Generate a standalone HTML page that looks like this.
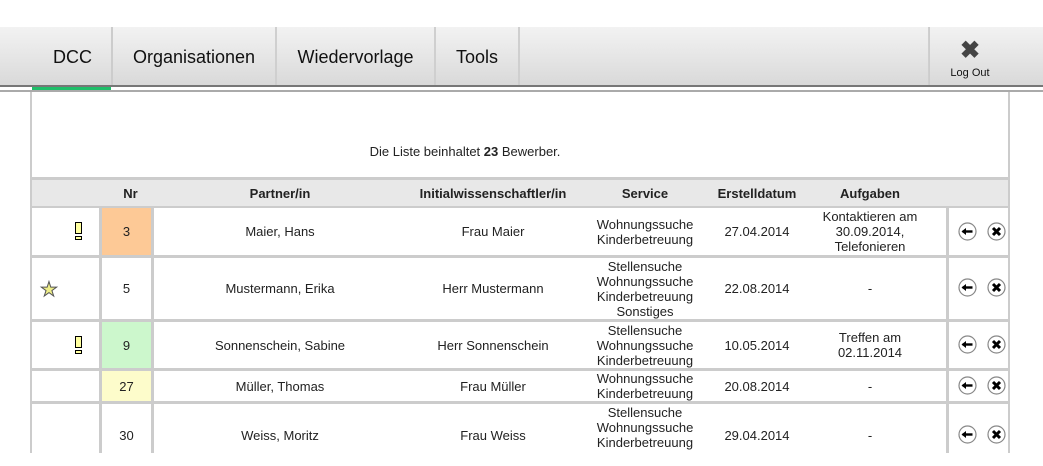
<!DOCTYPE html><html><head><style>
body{margin:0;width:1043px;height:453px;background:#fff;font-family:"Liberation Sans",sans-serif;position:relative;overflow:hidden;color:#222}
.nav{position:absolute;top:27px;left:0;width:1043px;height:58px;background:linear-gradient(#f2f2f2,#e6e6e6 50%,#d9d9d9)}
.tab{position:absolute;top:0;height:58px;line-height:60px;font-size:18px;text-align:center;color:#111;border-right:2px solid #cfcfcf}
.a{position:absolute}
.c{position:absolute;text-align:center;font-size:13px;line-height:15px;display:flex;align-items:center;justify-content:center}
.h{font-weight:bold}
svg.b{position:absolute;width:19px;height:19px}
</style></head><body>
<div class="nav">
<div class="tab" style="left:0;width:111px;border-right:2px solid #ccc"><span style="padding-left:34px">DCC</span></div>
<div class="tab" style="left:113px;width:162px">Organisationen</div>
<div class="tab" style="left:277px;width:157px">Wiedervorlage</div>
<div class="tab" style="left:436px;width:82px">Tools</div>
<div class="tab" style="left:520px;width:408px"></div>
<div class="a" style="left:929px;top:0;width:80px;height:58px;border-left:1px solid #ccc;text-align:center">
<div style="font-size:24px;font-weight:bold;color:#444;line-height:24px;margin-top:12px">✖</div>
<div style="font-size:11px;color:#111;margin-top:4px">Log Out</div></div>
</div>
<div class="a" style="top:85px;left:0;width:1043px;height:2px;background:#777"></div>
<div class="a" style="top:87px;left:32px;width:79px;height:3px;background:#1fbf6a"></div>
<div class="a" style="top:90px;left:0;width:1043px;height:2px;background:#aaa"></div>
<div class="a" style="top:92px;left:30px;width:2px;height:361px;background:#ccc"></div>
<div class="a" style="top:92px;left:1008px;width:2px;height:361px;background:#ccc"></div>
<div class="a" style="top:144px;left:365px;width:200px;text-align:center;font-size:13px">Die Liste beinhaltet <b>23</b> Bewerber.</div>
<div class="a" style="top:177px;left:32px;width:976px;height:3px;background:#ccc"></div>
<div class="a" style="top:180px;left:32px;width:976px;height:26px;background:#e8e8e8"></div>
<div class="c h" style="top:180px;left:105px;width:51px;height:26px">Nr</div>
<div class="c h" style="top:180px;left:153px;width:254px;height:26px">Partner/in</div>
<div class="c h" style="top:180px;left:407px;width:172px;height:26px">Initialwissenschaftler/in</div>
<div class="c h" style="top:180px;left:590px;width:110px;height:26px">Service</div>
<div class="c h" style="top:180px;left:702px;width:110px;height:26px">Erstelldatum</div>
<div class="c h" style="top:180px;left:815px;width:110px;height:26px">Aufgaben</div>
<div class="a" style="top:206px;left:32px;width:976px;height:2px;background:#ccc"></div>
<div class="a" style="top:255px;left:32px;width:976px;height:3px;background:#ccc"></div>
<div class="a" style="top:319px;left:32px;width:976px;height:3px;background:#ccc"></div>
<div class="a" style="top:368px;left:32px;width:976px;height:3px;background:#ccc"></div>
<div class="a" style="top:401px;left:32px;width:976px;height:3px;background:#ccc"></div>
<div class="a" style="top:206px;left:99px;width:3px;height:247px;background:#ccc"></div>
<div class="a" style="top:206px;left:151px;width:3px;height:247px;background:#ccc"></div>
<div class="a" style="top:206px;left:946px;width:3px;height:247px;background:#ccc"></div>
<div class="a" style="top:208px;left:102px;width:49px;height:47px;background:#fdc996"></div>
<div class="a" style="top:322px;left:102px;width:49px;height:46px;background:#ccf7cc"></div>
<div class="a" style="top:371px;left:102px;width:49px;height:30px;background:#fdfccb"></div>
<div class="a" style="top:222px;left:75px;width:5px;height:10px;background:#ffffa0;border:1px solid #000"></div><div class="a" style="top:236px;left:75px;width:5px;height:2px;background:#ffffa0;border:1px solid #000"></div>
<div class="c" style="top:208px;left:102px;width:49px;height:47px">3</div>
<div class="c" style="top:208px;left:153px;width:254px;height:47px">Maier, Hans</div>
<div class="c" style="top:208px;left:407px;width:172px;height:47px">Frau Maier</div>
<div class="c" style="top:208px;left:590px;width:110px;height:47px">Wohnungssuche<br>Kinderbetreuung</div>
<div class="c" style="top:208px;left:702px;width:110px;height:47px">27.04.2014</div>
<div class="c" style="top:208px;left:815px;width:110px;height:47px">Kontaktieren am<br>30.09.2014,<br>Telefonieren</div>
<div class="a" style="top:277px;left:40px;font-size:20px;color:#ee8;-webkit-text-stroke:1px #555">★</div>
<div class="c" style="top:258px;left:102px;width:49px;height:61px">5</div>
<div class="c" style="top:258px;left:153px;width:254px;height:61px">Mustermann, Erika</div>
<div class="c" style="top:258px;left:407px;width:172px;height:61px">Herr Mustermann</div>
<div class="c" style="top:258px;left:590px;width:110px;height:61px">Stellensuche<br>Wohnungssuche<br>Kinderbetreuung<br>Sonstiges</div>
<div class="c" style="top:258px;left:702px;width:110px;height:61px">22.08.2014</div>
<div class="c" style="top:258px;left:815px;width:110px;height:61px">-</div>
<div class="a" style="top:336px;left:75px;width:5px;height:10px;background:#ffffa0;border:1px solid #000"></div><div class="a" style="top:350px;left:75px;width:5px;height:2px;background:#ffffa0;border:1px solid #000"></div>
<div class="c" style="top:322px;left:102px;width:49px;height:46px">9</div>
<div class="c" style="top:322px;left:153px;width:254px;height:46px">Sonnenschein, Sabine</div>
<div class="c" style="top:322px;left:407px;width:172px;height:46px">Herr Sonnenschein</div>
<div class="c" style="top:322px;left:590px;width:110px;height:46px">Stellensuche<br>Wohnungssuche<br>Kinderbetreuung</div>
<div class="c" style="top:322px;left:702px;width:110px;height:46px">10.05.2014</div>
<div class="c" style="top:322px;left:815px;width:110px;height:46px">Treffen am<br>02.11.2014</div>
<div class="c" style="top:371px;left:102px;width:49px;height:30px">27</div>
<div class="c" style="top:371px;left:153px;width:254px;height:30px">Müller, Thomas</div>
<div class="c" style="top:371px;left:407px;width:172px;height:30px">Frau Müller</div>
<div class="c" style="top:371px;left:590px;width:110px;height:30px">Wohnungssuche<br>Kinderbetreuung</div>
<div class="c" style="top:371px;left:702px;width:110px;height:30px">20.08.2014</div>
<div class="c" style="top:371px;left:815px;width:110px;height:30px">-</div>
<div class="c" style="top:404px;left:102px;width:49px;height:62px">30</div>
<div class="c" style="top:404px;left:153px;width:254px;height:62px">Weiss, Moritz</div>
<div class="c" style="top:404px;left:407px;width:172px;height:62px">Frau Weiss</div>
<div class="c" style="top:404px;left:590px;width:110px;height:62px">Stellensuche<br>Wohnungssuche<br>Kinderbetreuung<br>&nbsp;</div>
<div class="c" style="top:404px;left:702px;width:110px;height:62px">29.04.2014</div>
<div class="c" style="top:404px;left:815px;width:110px;height:62px">-</div>
<svg width="0" height="0" style="position:absolute"><defs>
<g id="L"><circle cx="9.5" cy="9.5" r="8.5" fill="#fff" stroke="#888" stroke-width="1.2"/><path d="M4.5 9.5H14.5" stroke="#000" stroke-width="2.4"/><path d="M3.5 9.5L8 6V13Z" fill="#000"/></g>
<g id="X"><circle cx="9.5" cy="9.5" r="8.5" fill="#fff" stroke="#888" stroke-width="1.2"/><path d="M6 6L13 13M13 6L6 13" stroke="#000" stroke-width="3"/></g></defs></svg>
<svg class="b" style="top:222px;left:958px"><use href="#L"/></svg><svg class="b" style="top:222px;left:987px"><use href="#X"/></svg>
<svg class="b" style="top:278px;left:958px"><use href="#L"/></svg><svg class="b" style="top:278px;left:987px"><use href="#X"/></svg>
<svg class="b" style="top:335px;left:958px"><use href="#L"/></svg><svg class="b" style="top:335px;left:987px"><use href="#X"/></svg>
<svg class="b" style="top:376px;left:958px"><use href="#L"/></svg><svg class="b" style="top:376px;left:987px"><use href="#X"/></svg>
<svg class="b" style="top:425px;left:958px"><use href="#L"/></svg><svg class="b" style="top:425px;left:987px"><use href="#X"/></svg>
</body></html>
